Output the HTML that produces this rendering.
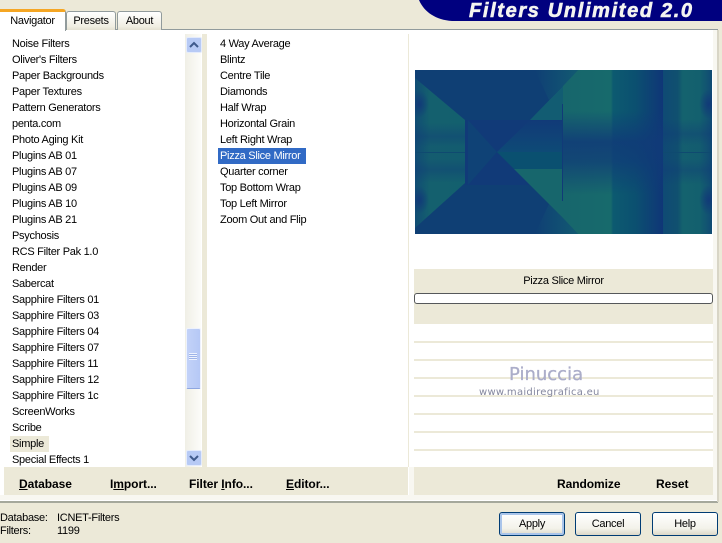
<!DOCTYPE html>
<html><head><meta charset="utf-8">
<style>
html,body{margin:0;padding:0}
body{width:722px;height:543px;overflow:hidden;background:#ece9d8;position:relative;font:11px/16px "Liberation Sans",sans-serif;letter-spacing:-.28px;color:#000}
.a{position:absolute}
.list div{height:16px;white-space:nowrap;padding-left:2px}
.b{font:bold 12px/16px "Liberation Sans",sans-serif;letter-spacing:-.06px;position:absolute;top:476px;white-space:nowrap}
.line{position:absolute;left:414px;width:299px;height:2px;background:#ece9d8}
.btn{position:absolute;top:512px;width:64px;height:22px;border:1px solid #003c74;border-radius:3px;background:linear-gradient(#fff,#f3f2ea 70%,#dcd8c8);text-align:center;line-height:22px}
</style></head><body>
<!-- header -->
<svg class="a" style="left:400px;top:0" width="322" height="22"><path d="M19 0 C24 12 36 20 52 21 L322 21 L322 0 Z" fill="#00007f"/></svg>
<div class="a" style="left:469px;top:0;font:italic bold 20px/22px 'Liberation Sans',sans-serif;color:#f4f4f0;letter-spacing:1.65px;white-space:nowrap;-webkit-text-stroke:.6px #f4f4f0">Filters Unlimited 2.0</div>
<!-- tab panel -->
<div class="a" style="left:0;top:29px;width:717px;height:471px;background:#fff;border-top:1px solid #919b9c;border-right:1px solid #919b9c;border-bottom:2px solid #a5a89c"></div>
<div class="a" style="left:717px;top:30px;width:2px;height:472px;background:#d8d5c6"></div>
<div class="a" style="left:0;top:495px;width:717px;height:5px;background:#f8f7f1"></div>
<div class="a" style="left:713px;top:30px;width:4px;height:470px;background:#f8f7f1"></div>
<div class="a" style="left:409px;top:467px;width:5px;height:33px;background:#f8f7f1"></div>
<!-- tabs -->
<div class="a" style="left:0;top:9px;width:65px;background:#fff;border-top:3px solid #f5a623;border-right:1px solid #919b9c;border-radius:0 3px 0 0;text-align:center;line-height:18px;height:19px">Navigator</div>
<div class="a" style="left:66px;top:11px;width:48px;height:18px;border:1px solid #919b9c;border-bottom:0;border-radius:3px 3px 0 0;background:linear-gradient(#fff,#f0eee2 80%,#e4e1d2);text-align:center;line-height:19px">Presets</div>
<div class="a" style="left:117px;top:11px;width:43px;height:18px;border:1px solid #919b9c;border-bottom:0;border-radius:3px 3px 0 0;background:linear-gradient(#fff,#f0eee2 80%,#e4e1d2);text-align:center;line-height:19px">About</div>
<!-- separators -->
<div class="a" style="left:202px;top:34px;width:5px;height:433px;background:#ece9d8"></div>
<div class="a" style="left:408px;top:34px;width:1px;height:433px;background:#ece9d8"></div>
<!-- left list -->
<div class="a" style="left:10px;top:436px;width:39px;height:16px;background:#ece9d8"></div>
<div class="a list" style="left:10px;top:36px;width:172px">
<div>Noise Filters</div><div>Oliver's Filters</div><div>Paper Backgrounds</div><div>Paper Textures</div><div>Pattern Generators</div><div>penta.com</div><div>Photo Aging Kit</div><div>Plugins AB 01</div><div>Plugins AB 07</div><div>Plugins AB 09</div><div>Plugins AB 10</div><div>Plugins AB 21</div><div>Psychosis</div><div>RCS Filter Pak 1.0</div><div>Render</div><div>Sabercat</div><div>Sapphire Filters 01</div><div>Sapphire Filters 03</div><div>Sapphire Filters 04</div><div>Sapphire Filters 07</div><div>Sapphire Filters 11</div><div>Sapphire Filters 12</div><div>Sapphire Filters 1c</div><div>ScreenWorks</div><div>Scribe</div><div>Simple</div><div>Special Effects 1</div>
</div>
<!-- scrollbar -->
<div class="a" style="left:185px;top:34px;width:16px;height:433px;background:linear-gradient(90deg,#f0efe6,#fcfcf9)"></div>
<div class="a" style="left:186px;top:37px;width:14px;height:14px;border:1px solid #e4ebfb;border-radius:2px;background:#b7caf5"></div>
<svg class="a" style="left:186px;top:37px" width="16" height="16"><path d="M4 10 L8 6 L12 10" fill="none" stroke="#3f5a8c" stroke-width="2"/></svg>
<div class="a" style="left:186px;top:328px;width:13px;height:59px;border:1px solid #eef2fd;border-bottom-color:#8ea6e0;border-radius:2px;background:linear-gradient(90deg,#c3d2f8,#b5c8f5)"></div>
<div class="a" style="left:189px;top:353px;width:8px;height:7px;background:repeating-linear-gradient(#eef3fe 0 1px,#9db3e8 1px 2px)"></div>
<div class="a" style="left:186px;top:450px;width:14px;height:14px;border:1px solid #e4ebfb;border-radius:2px;background:#b7caf5"></div>
<svg class="a" style="left:186px;top:450px" width="16" height="16"><path d="M4 6 L8 10 L12 6" fill="none" stroke="#3f5a8c" stroke-width="2"/></svg>
<!-- mid list -->
<div class="a" style="left:218px;top:148px;width:88px;height:16px;background:#316ac5"></div>
<div class="a list" style="left:218px;top:36px;width:180px">
<div>4 Way Average</div><div>Blintz</div><div>Centre Tile</div><div>Diamonds</div><div>Half Wrap</div><div>Horizontal Grain</div><div>Left Right Wrap</div><div style="color:#fff">Pizza Slice Mirror</div><div>Quarter corner</div><div>Top Bottom Wrap</div><div>Top Left Mirror</div><div>Zoom Out and Flip</div>
</div>
<!-- preview -->
<svg class="a" style="left:415px;top:70px" width="297" height="164" viewBox="0 0 297 164">
<defs>
<linearGradient id="r" gradientUnits="userSpaceOnUse" x1="148" x2="248" y1="0" y2="0">
<stop offset="0" stop-color="#17666c"/><stop offset=".48" stop-color="#176a6c"/><stop offset=".5" stop-color="#0c5a70"/><stop offset=".72" stop-color="#0b5070"/><stop offset="1" stop-color="#0f3677"/>
</linearGradient>
<linearGradient id="t" gradientUnits="userSpaceOnUse" x1="248" x2="297" y1="0" y2="0">
<stop offset="0" stop-color="#0f4a74"/><stop offset=".3" stop-color="#10506f"/><stop offset=".4" stop-color="#14626e"/><stop offset=".75" stop-color="#13606e"/><stop offset="1" stop-color="#104a74"/>
</linearGradient>
<linearGradient id="v" x1="0" x2="0" y1="0" y2="1">
<stop offset="0" stop-color="#103a78" stop-opacity="0"/><stop offset=".25" stop-color="#103a78" stop-opacity="0"/><stop offset=".44" stop-color="#103a78" stop-opacity=".85"/><stop offset=".56" stop-color="#103a78" stop-opacity=".7"/><stop offset=".76" stop-color="#103a78" stop-opacity="0"/><stop offset="1" stop-color="#103a78" stop-opacity="0"/>
</linearGradient>
<linearGradient id="l" gradientUnits="userSpaceOnUse" x1="0" x2="50" y1="0" y2="0">
<stop offset="0" stop-color="#104c74"/><stop offset=".3" stop-color="#14606e"/><stop offset="1" stop-color="#13606e"/>
</linearGradient>
<linearGradient id="br" x1="0" x2="0" y1="0" y2="1">
<stop offset="0" stop-color="#113a78" stop-opacity="0"/><stop offset=".3" stop-color="#113a78" stop-opacity="0"/><stop offset=".39" stop-color="#113a78" stop-opacity=".4"/><stop offset=".46" stop-color="#113a78" stop-opacity=".1"/><stop offset=".54" stop-color="#113a78" stop-opacity=".1"/><stop offset=".61" stop-color="#113a78" stop-opacity=".4"/><stop offset=".7" stop-color="#113a78" stop-opacity="0"/><stop offset="1" stop-color="#113a78" stop-opacity="0"/>
</linearGradient>
<linearGradient id="tb" x1="0" x2="0" y1="0" y2="1"><stop offset="0" stop-color="#113a78"/><stop offset="1" stop-color="#0e4a76"/></linearGradient>
<linearGradient id="f" gradientUnits="userSpaceOnUse" x1="120" x2="163" y1="0" y2="0"><stop offset="0" stop-color="#0f3f74"/><stop offset="1" stop-color="#125a72"/></linearGradient>
<radialGradient id="c"><stop offset="0" stop-color="#113a78"/><stop offset="1" stop-color="#113a78" stop-opacity="0"/></radialGradient>
</defs>
<rect width="297" height="164" fill="#0f3f74"/>
<polygon points="120,0 163,0 148,16 134,30" fill="url(#f)"/>
<polygon points="120,164 163,164 148,148 134,134" fill="url(#f)"/>
<polygon points="0,8 50,50 50,113 0,158" fill="url(#l)"/>
<polygon points="0,8 50,50 50,113 0,158" fill="url(#br)"/>
<ellipse cx="4" cy="34" rx="10" ry="14" fill="url(#c)"/><ellipse cx="4" cy="130" rx="10" ry="14" fill="url(#c)"/>
<rect x="50" y="50" width="98" height="65" fill="#113a78"/>
<polygon points="53,50 82,82 53,115" fill="#0f4276"/>
<polygon points="115,50 148,50 148,82 82,82" fill="url(#tb)"/>
<polygon points="82,82 148,82 148,99 99,99" fill="#0a5070"/>
<polygon points="99,99 148,99 148,148" fill="#17666c"/>
<polygon points="115,50 148,50 148,16" fill="#125c72"/>
<polygon points="148,16 163,0 248,0 248,164 163,164 148,148" fill="url(#r)"/>
<polygon points="148,16 163,0 248,0 248,164 163,164 148,148" fill="url(#v)"/>
<rect x="248" width="49" height="164" fill="url(#t)"/>
<rect x="248" width="49" height="164" fill="url(#br)"/>
<ellipse cx="294" cy="34" rx="10" ry="15" fill="url(#c)"/><ellipse cx="294" cy="130" rx="10" ry="15" fill="url(#c)"/>
<rect x="147" y="34" width="1" height="97" fill="#113a78"/>
<rect x="0" y="82" width="50" height="1" fill="#0f4a70"/><rect x="248" y="82" width="49" height="1" fill="#0f4a70"/>
</svg>
<!-- right panel -->
<div class="a" style="left:414px;top:269px;width:299px;height:55px;background:#ece9d8"></div>
<div class="a" style="left:414px;top:273px;width:299px;text-align:center">Pizza Slice Mirror</div>
<div class="a" style="left:414px;top:293px;width:297px;height:9px;background:#fff;border:1px solid #55585a;border-radius:3px"></div>
<div class="line" style="top:341px"></div><div class="line" style="top:359px"></div><div class="line" style="top:377px"></div><div class="line" style="top:395px"></div><div class="line" style="top:413px"></div><div class="line" style="top:431px"></div><div class="line" style="top:449px"></div>
<div class="a" style="left:509px;top:364px;font:18px/22px 'DejaVu Sans',sans-serif;letter-spacing:0;color:#abadc9;white-space:nowrap;-webkit-text-stroke:.3px #abadc9">Pinuccia</div>
<div class="a" style="left:479px;top:386px;font:10px/13px 'DejaVu Sans',sans-serif;color:#84879e;white-space:nowrap;letter-spacing:.28px">www.maidiregrafica.eu</div>
<!-- bottom bars -->
<div class="a" style="left:4px;top:467px;width:404px;height:28px;background:#ece9d8"></div>
<div class="a" style="left:414px;top:467px;width:299px;height:28px;background:#ece9d8"></div>
<div class="b" style="left:19px"><u>D</u>atabase</div>
<div class="b" style="left:110px">I<u>m</u>port...</div>
<div class="b" style="left:189px">Filter <u>I</u>nfo...</div>
<div class="b" style="left:286px"><u>E</u>ditor...</div>
<div class="b" style="left:557px">Randomize</div>
<div class="b" style="left:656px">Reset</div>
<!-- status -->
<div class="a" style="left:0;top:510px;white-space:nowrap">Database:</div>
<div class="a" style="left:57px;top:510px;white-space:nowrap">ICNET-Filters</div>
<div class="a" style="left:0;top:523px;white-space:nowrap">Filters:</div>
<div class="a" style="left:57px;top:523px;white-space:nowrap">1199</div>
<!-- buttons -->
<div class="btn" style="left:499px;box-shadow:inset 0 0 0 2px #a9c4ea">Apply</div>
<div class="btn" style="left:575px">Cancel</div>
<div class="btn" style="left:652px">Help</div>
</body></html>
